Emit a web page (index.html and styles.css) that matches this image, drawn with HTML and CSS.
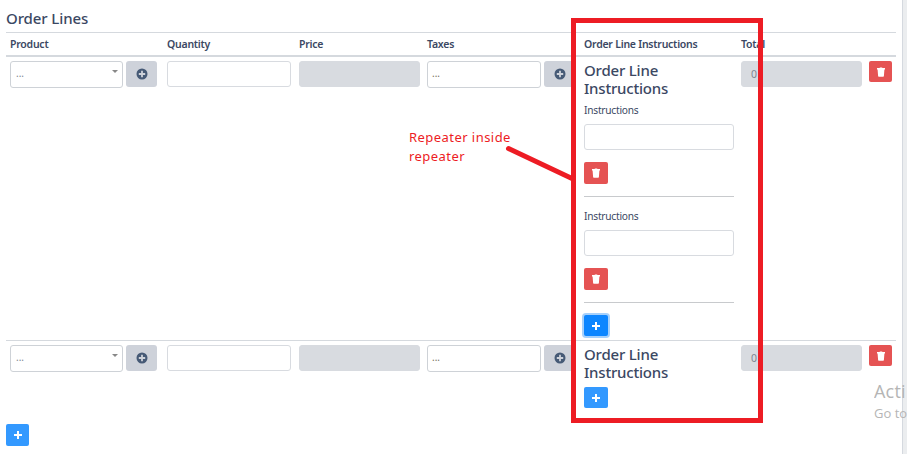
FILE: index.html
```html
<!DOCTYPE html>
<html lang="en">
<head>
<meta charset="utf-8">
<title>Order Lines</title>
<link rel="stylesheet" href="styles.css">
</head>
<body>
<svg class="defs" aria-hidden="true">
  <symbol id="plus" viewBox="0 0 10 10"><path d="M4 1h2v3h3v2H6v3H4V6H1V4h3z"/></symbol>
  <symbol id="trash" viewBox="0 0 10 10"><path d="M1 1h2.500l.5-.6h2l.5.6H9v1.500H1zM1.600 2.500h6.800L7.900 9q0 .8-.8.8H2.900q-.8 0-.8-.8z"/></symbol>
  <symbol id="circle" viewBox="0 0 12 12"><path fill-rule="evenodd" d="M6 .5a5.5 5.5 0 1 0 0 11a5.5 5.5 0 1 0 0-11zM5.1 2.8h1.800v2.300h2.300v1.800H6.900v2.300H5.100V6.900H2.800V5.100h2.300z"/></symbol>
</svg>
<main class="page">
  <h1 class="title">Order Lines</h1>
  <section class="table">
    <div class="row head">
      <div>Product</div><div>Quantity</div><div>Price</div><div>Taxes</div><div>Order Line Instructions</div><div>Total</div><div></div>
    </div>
    <div class="row first">
      <div class="group product"><div class="select"><span>...</span><i class="caret"></i></div><button class="add"><svg><use href="#circle"/></svg></button></div>
      <div><div class="input qty"></div></div>
      <div><div class="input off"></div></div>
      <div class="group"><div class="select tax"><span>...</span></div><button class="add"><svg><use href="#circle"/></svg></button></div>
      <div class="nested">
        <h2 class="sub">Order Line Instructions</h2>
        <div class="item"><label>Instructions</label><div class="input"></div><button class="btn red"><svg><use href="#trash"/></svg></button></div>
        <div class="item"><label>Instructions</label><div class="input"></div><button class="btn red"><svg><use href="#trash"/></svg></button></div>
        <button class="btn blue focus"><svg><use href="#plus"/></svg></button>
      </div>
      <div><div class="input off">0</div></div>
      <div><button class="btn red end"><svg><use href="#trash"/></svg></button></div>
    </div>
    <div class="row second">
      <div class="group product"><div class="select"><span>...</span><i class="caret"></i></div><button class="add"><svg><use href="#circle"/></svg></button></div>
      <div><div class="input qty"></div></div>
      <div><div class="input off"></div></div>
      <div class="group"><div class="select tax"><span>...</span></div><button class="add"><svg><use href="#circle"/></svg></button></div>
      <div class="nested">
        <h2 class="sub">Order Line Instructions</h2>
        <button class="btn blue"><svg><use href="#plus"/></svg></button>
      </div>
      <div><div class="input off">0</div></div>
      <div><button class="btn red end"><svg><use href="#trash"/></svg></button></div>
    </div>
  </section>
  <button class="btn blue bottom"><svg><use href="#plus"/></svg></button>
</main>
<aside class="edge"></aside>
<div class="watermark"><div class="w1">Acti</div><div class="w2">Go to</div></div>
<svg class="mark" width="907" height="454"><rect x="573.5" y="20.5" width="187" height="400"/><path d="M508.500 148.500L572 178.500"/></svg>
<p class="note">Repeater inside<br>repeater</p>
</body>
</html>
```
FILE: styles.css
```css
* { box-sizing: border-box; }
body { margin: 0; width: 907px; height: 454px; overflow: hidden; position: relative; display: flex; justify-content: space-between; background: #fff; color: #3b4863; font: 10.5px/14px "Noto Sans", sans-serif; }
.defs { position: absolute; width: 0; height: 0; }
.page { width: 890px; margin-left: 6px; }
h1, h2, p { margin: 0; }
.title { height: 32px; padding-top: 8px; font-size: 15px; line-height: 20px; font-weight: 500; letter-spacing: -.1px; }
.row { display: grid; grid-template-columns: 157px 132px 128px 157px 157px 128px 31px; border-top: 1px solid #d5d9de; }
.row > div { padding: 4px 3px 0 4px; }
.head { height: 25px; border-bottom: 2px solid #d5d9de; font-weight: 600; font-size: 10.5px; letter-spacing: -.24px; white-space: nowrap; }
.first { height: 283px; border-top: 0; }
.second { height: 84px; }
.row > .group { display: flex; gap: 3px; padding-right: 5px; }
.row > .product { padding-right: 6px; }
.select { position: relative; flex: 1; height: 27px; border: 1px solid #ced2d7; border-radius: 3px; padding: 4px 5px; font-size: 10px; color: #7d8490; }
.tax { color: #77715f; padding-left: 4px; }
.caret { position: absolute; right: 4px; top: 8px; border: 3px solid transparent; border-top: 3px solid #888; border-bottom: 0; }
button { border: 0; padding: 0; display: flex; align-items: center; justify-content: center; font: inherit; }
.add { width: 31px; height: 26px; border-radius: 3px; background: #ced2da; }
.add svg { width: 12px; height: 12px; fill: #465a76; }
.input { height: 26px; border: 1px solid #d8dbe0; border-radius: 3px; background: #fff; }
.qty { width: 124px; }
.off { background: #d8dbe0; padding: 5px 9px; color: #7d8591; }
.nested .input { width: 150px; }
.sub { width: 100px; height: 42px; font-size: 15px; line-height: 18px; font-weight: 500; letter-spacing: -.2px; }
.item { width: 150px; height: 94px; margin-bottom: 12px; border-bottom: 1px solid #c8cacd; }
.item label { display: block; height: 21px; letter-spacing: -.25px; font-size: 10.2px; }
.item .btn { margin-top: 12px; }
.btn { width: 24px; height: 22px; border-radius: 2px; }
.btn svg { width: 10px; height: 10px; fill: #fff; }
.red { background: #e55353; }
.blue { background: #3399ff; }
.end { width: 23px; height: 21px; }
.nested > .blue { height: 21px; }
.focus { background: #0d86ff; box-shadow: 0 0 0 2px #a6d0fb; }
.bottom { width: 23px; }
.edge { width: 5px; background: #ebedef; border-left: 1px solid #d5d9df; }
.watermark { position: absolute; left: 874px; top: 380px; width: 33px; overflow: hidden; color: #b5b5b5; white-space: nowrap; font-family: "Open Sans", sans-serif; }
.w1 { font-size: 18px; line-height: 22px; letter-spacing: .2px; }
.w2 { font-size: 13px; line-height: 22px; }
.mark { position: absolute; left: 0; top: 0; fill: none; stroke: #ed1c24; stroke-width: 5; stroke-linecap: round; }
.note { position: absolute; left: 409px; top: 128px; color: #ed1c24; font: 13px/19px "Noto Sans", sans-serif; letter-spacing: .45px; }
```
